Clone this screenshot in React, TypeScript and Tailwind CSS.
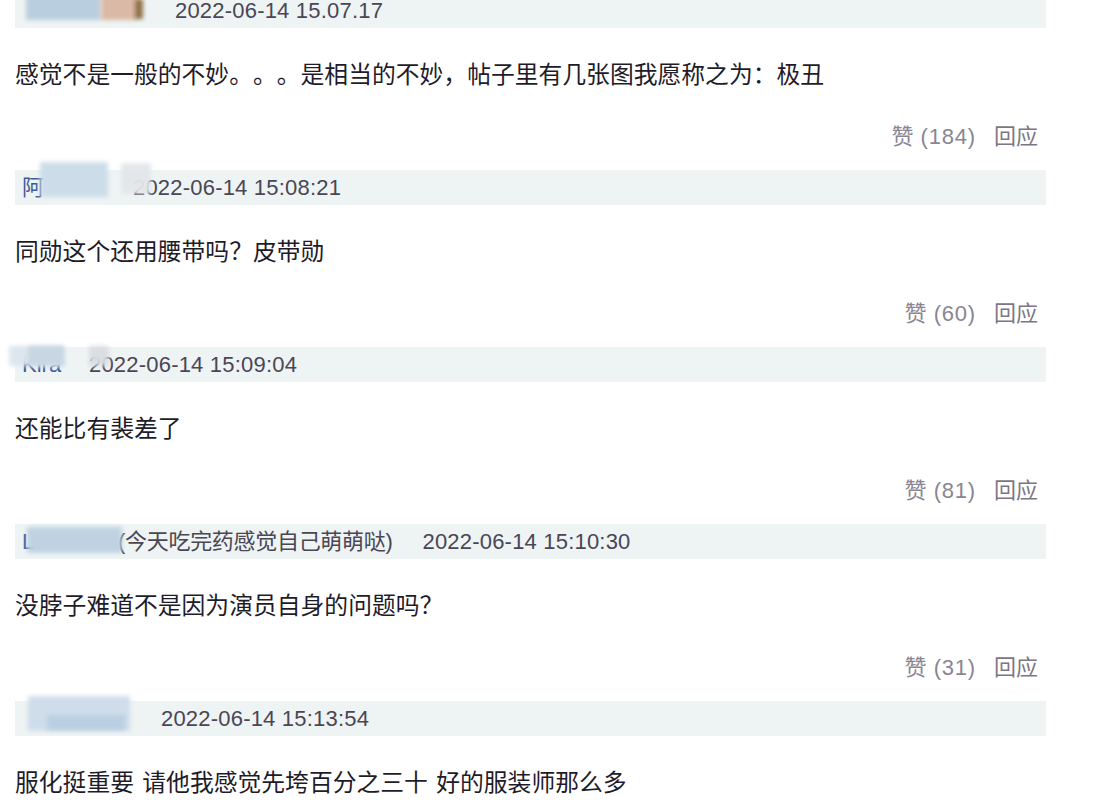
import React from 'react';

interface Comment {
  id: number;
  name: string;
  nameWidth: string;
  suffix?: string;
  time: string;
  text: string;
  likes?: number;
  blurs: { cls: string }[];
}

const comments: Comment[] = [
  {
    id: 1,
    name: '',
    nameWidth: 'w-[160px]',
    time: '2022-06-14 15.07.17',
    text: '感觉不是一般的不妙。。。是相当的不妙，帖子里有几张图我愿称之为：极丑',
    likes: 184,
    blurs: [
      { cls: 'left-[11px] -top-[4px] w-[75px] h-[31px] bg-[#b7cddd]' },
      { cls: 'left-[86px] -top-[4px] w-[36px] h-[31px] bg-[#d9b7a2]' },
      { cls: 'left-[120px] top-[6px] w-[8px] h-[20px] bg-[#8a6a3e]' },
    ],
  },
  {
    id: 2,
    name: '阿',
    nameWidth: 'w-[118px]',
    time: '2022-06-14 15:08:21',
    text: '同勋这个还用腰带吗？皮带勋',
    likes: 60,
    blurs: [
      { cls: 'left-[25px] -top-[8px] w-[68px] h-[35px] bg-[#cbdbe8]' },
      { cls: 'left-[106px] -top-[7px] w-[30px] h-[31px] bg-[#e3e7ea]' },
    ],
  },
  {
    id: 3,
    name: 'Kira',
    nameWidth: 'w-[74px]',
    time: '2022-06-14 15:09:04',
    text: '还能比有裴差了',
    likes: 81,
    blurs: [
      { cls: 'left-[-6px] -top-[1px] w-[56px] h-[20px] bg-[#dde6ee]' },
      { cls: 'left-[13px] -top-[1px] w-[36px] h-[20px] bg-[#c7d6e3]' },
      { cls: 'left-[74px] -top-[1px] w-[20px] h-[20px] bg-[#d8dde2]' },
    ],
  },
  {
    id: 4,
    name: 'L',
    nameWidth: 'w-[103px]',
    suffix: '(今天吃完药感觉自己萌萌哒)',
    time: '2022-06-14 15:10:30',
    text: '没脖子难道不是因为演员自身的问题吗？',
    likes: 31,
    blurs: [
      { cls: 'left-[12px] top-[3px] w-[95px] h-[26px] bg-[#bcd1e2]' },
    ],
  },
  {
    id: 5,
    name: '',
    nameWidth: 'w-[146px]',
    time: '2022-06-14 15:13:54',
    text: '服化挺重要 请他我感觉先垮百分之三十 好的服装师那么多',
    blurs: [
      { cls: 'left-[13px] -top-[5px] w-[102px] h-[35px] bg-[#cedcea]' },
      { cls: 'left-[32px] top-[14px] w-[78px] h-[15px] bg-[#b9cfe2]' },
    ],
  },
];

const CommentBlock: React.FC<{ c: Comment }> = ({ c }) => (
  <div className="flex flex-col">
    <div className="relative h-[35px] w-[1031px] bg-[#eef3f3] flex items-center text-[22px] font-['Liberation_Sans','Noto_Sans_CJK_SC',sans-serif]">
      <div className={`${c.nameWidth} shrink-0 pl-[7px] text-[#3d5a9a]`}>{c.name}</div>
      {c.suffix && <span className="text-[#4a4654] tracking-[-0.3px]">{c.suffix}</span>}
      <span className={`${c.suffix ? 'ml-[30px]' : ''} text-[#4a4656] tracking-[0.2px]`}>{c.time}</span>
      {c.blurs.map((b, i) => (
        <div key={i} className={`absolute ${b.cls} blur-[2px] opacity-95`} />
      ))}
    </div>
    <div className="h-[88px] pt-[2px] flex items-center text-[23.8px] text-[#1f1c2a] font-['Noto_Sans_CJK_SC',sans-serif] leading-none [text-spacing-trim:space-all] [word-spacing:3px]">
      {c.text}
    </div>
    {c.likes !== undefined && (
      <div className="h-[40px] w-[1031px] mb-[14px] flex items-center justify-end gap-[18px] pr-[8px] text-[22px] text-[#8a8592] font-['Liberation_Sans','Noto_Sans_CJK_SC',sans-serif]">
        <span className="flex items-center gap-[7px]">
          <span>赞</span>
          <span className="tracking-[0.8px]">({c.likes})</span>
        </span>
        <span className="text-[#7d7685]">回应</span>
      </div>
    )}
  </div>
);

export default function App() {
  return (
    <div className="w-[1106px] h-[804px] overflow-hidden bg-white">
      <div className="-mt-[7px] pl-[15px] flex flex-col">
        {comments.map((c) => (
          <CommentBlock key={c.id} c={c} />
        ))}
      </div>
    </div>
  );
}
